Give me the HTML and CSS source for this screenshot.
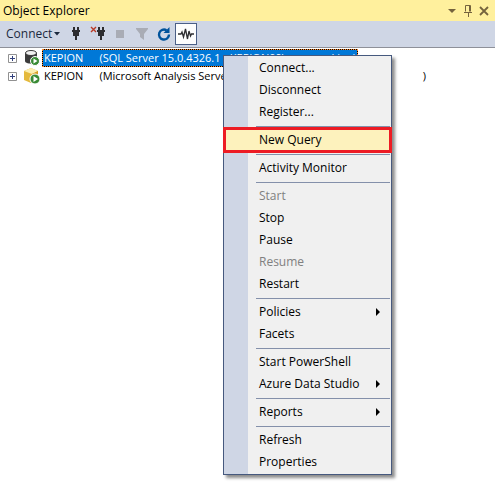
FILE: index.html
```
<!DOCTYPE html>
<html lang="en">
<head>
<meta charset="utf-8">
<title>Object Explorer</title>
<link rel="stylesheet" href="styles.css">
</head>
<body>
<header class="titlebar">
  <h1 class="title">Object Explorer</h1>
  <div class="window-tools">
    <button class="window-button" aria-label="Window position"><svg width="16" height="16" viewBox="0 0 16 16"><path d="M4 6h8L8 10z" fill="#75633d"/></svg></button>
    <button class="window-button" aria-label="Auto hide"><svg width="16" height="16" viewBox="0 0 16 16"><path d="M5.500 8.500v-6h5v6M4 9.500h8M8.500 9v5M9.500 3v5.500" fill="none" stroke="#75633d"/></svg></button>
    <button class="window-button" aria-label="Close"><svg width="16" height="16" viewBox="0 0 16 16"><path d="M4 4l8 8M12 4l-8 8" fill="none" stroke="#75633d" stroke-width="1.800"/></svg></button>
  </div>
</header>
<div class="toolbar">
  <button class="connect">Connect <svg width="6" height="4" viewBox="0 0 6 4"><path d="M0 0h6L3 3.500z" fill="#1b293e"/></svg></button>
  <button class="tool" aria-label="Connect Object Explorer"><svg width="16" height="16" viewBox="0 0 16 16"><path d="M5 1h2v3h2V1h2v3h1v2h-1v4H9v4H7v-4H5V6H4V4h1z" fill="#2d2d30"/></svg></button>
  <button class="tool" aria-label="Disconnect"><svg width="16" height="16" viewBox="0 0 16 16"><path d="M8 1h2v3h2V1h2v3h1v2h-1v4h-2v4h-2v-4H8V6H7V4h1z" fill="#2d2d30"/><path d="M1 1l5 5M6 1L1 6" stroke="#b93a26" stroke-width="1.400"/></svg></button>
  <button class="tool" aria-label="Stop" disabled><svg width="16" height="16" viewBox="0 0 16 16"><path d="M4 4h8v8H4z" fill="#a9acb5"/></svg></button>
  <button class="tool" aria-label="Filter" disabled><svg width="16" height="16" viewBox="0 0 16 16"><path d="M2 2h12v1L10 8v6L6 11V8L2 3z" fill="#a9acb5"/></svg></button>
  <button class="tool" aria-label="Refresh"><svg width="16" height="16" viewBox="0 0 16 16"><path d="M13 8.500A5 5 0 1 1 10.500 4.200" fill="none" stroke="#00539c" stroke-width="2.400"/><path d="M13.500 1v6H7.500z" fill="#00539c"/></svg></button>
  <button class="tool active" aria-label="Activity Monitor"><svg width="16" height="16" viewBox="0 0 16 16"><path d="M0 8h3l1-2 1.500 5 2-8 2 10 1.500-8 1.500 5 1-2h3" fill="none" stroke="#2d2d30" stroke-width="1.300"/></svg></button>
</div>
<main class="tree">
  <div class="node">
    <button class="expander" aria-label="Expand"><svg width="9" height="9" viewBox="0 0 9 9"><path d="M.5.5h8v8h-8z" fill="#fff" stroke="#919191"/><path d="M2 4.500h5M4.500 2v5" stroke="#32417d"/></svg></button>
    <svg class="node-icon" width="18" height="18" viewBox="0 0 18 18"><path d="M2 4v8c0 3.500 12 3.500 12 0V4z" fill="#3c3c3c"/><ellipse cx="8" cy="4" rx="5.500" ry="2.500" fill="#f2f2f2" stroke="#3c3c3c"/><circle cx="12" cy="12" r="4.500" fill="#388a34" stroke="#fff"/><path d="M10.500 9.500v5L14.500 12z" fill="#fff"/></svg>
    <span class="label selected"><span>KEPION</span><span>(SQL Server 15.0.4326.1 - KEPION09\</span><span class="tail">king)</span></span>
  </div>
  <div class="node">
    <button class="expander" aria-label="Expand"><svg width="9" height="9" viewBox="0 0 9 9"><path d="M.5.5h8v8h-8z" fill="#fff" stroke="#919191"/><path d="M2 4.500h5M4.500 2v5" stroke="#32417d"/></svg></button>
    <svg class="node-icon" width="18" height="18" viewBox="0 0 18 18"><path d="M8 1l7 3v8l-7 4-7-3V4z" fill="#e4b93c"/><path d="M8 1l7 3-6 3-8-3z" fill="#fbeeb0"/><path d="M9 7l6-3v8l-6 4z" fill="#d59b23"/><circle cx="12" cy="12" r="5" fill="#388a34" stroke="#fff"/><path d="M10.500 9v6L15 12z" fill="#fff"/></svg>
    <span class="label wide"><span>KEPION</span><span>(Microsoft Analysis Server</span><span class="tail">)</span></span>
  </div>
</main>
<div class="menu" role="menu">
  <button class="item" role="menuitem">Connect...</button>
  <button class="item" role="menuitem">Disconnect</button>
  <button class="item" role="menuitem">Register...</button>
  <hr class="separator">
  <button class="item highlighted" role="menuitem">New Query</button>
  <hr class="separator">
  <button class="item" role="menuitem">Activity Monitor</button>
  <hr class="separator">
  <button class="item" role="menuitem" disabled>Start</button>
  <button class="item" role="menuitem">Stop</button>
  <button class="item" role="menuitem">Pause</button>
  <button class="item" role="menuitem" disabled>Resume</button>
  <button class="item" role="menuitem">Restart</button>
  <hr class="separator">
  <button class="item submenu" role="menuitem">Policies</button>
  <button class="item" role="menuitem">Facets</button>
  <hr class="separator">
  <button class="item" role="menuitem">Start PowerShell</button>
  <button class="item submenu" role="menuitem">Azure Data Studio</button>
  <hr class="separator">
  <button class="item submenu" role="menuitem">Reports</button>
  <hr class="separator">
  <button class="item" role="menuitem">Refresh</button>
  <button class="item" role="menuitem">Properties</button>
</div>
</body>
</html>
```
FILE: styles.css
```
* { box-sizing: border-box; }
body {
  margin: 0;
  background: #fff;
  color: #000;
  font: 12px/18px "Open Sans", "Noto Sans", sans-serif;
}
button {
  margin: 0;
  padding: 0;
  border: 0;
  background: none;
  color: inherit;
  font: inherit;
}
svg { display: block; flex: none; }
.titlebar {
  display: flex;
  align-items: center;
  justify-content: space-between;
  height: 21px;
  padding: 0 3px;
  background: #fff09d;
}
.title { margin: 0; font: inherit; }
.window-tools { display: flex; }
.toolbar {
  display: flex;
  align-items: center;
  height: 27px;
  padding: 0 6px;
  background: #cfd6e5;
  border-bottom: 1px solid #8e9099;
  color: #1b293e;
}
.connect {
  display: flex;
  align-items: center;
  gap: 2px;
  width: 59px;
}
.tool {
  display: flex;
  align-items: center;
  justify-content: center;
  width: 22px;
  height: 22px;
}
.tool.active { border: 1px solid #4b5f86; background: #fdfdfd; }
.tree { padding-top: 1px; font-size: 11px; }
.node {
  display: flex;
  align-items: center;
  height: 18px;
  padding-left: 8px;
}
.node-icon { margin: 0 1px 0 6px; }
.label {
  display: flex;
  gap: 16px;
  width: 316px;
  height: 18px;
  padding: 0 1px;
  line-height: 16px;
  border: 1px dotted transparent;
  white-space: nowrap;
}
.label.selected {
  background: linear-gradient(#0078d7, #0078d7) padding-box, #000;
  border-color: #ff8728;
  color: #fff;
}
.label.wide { width: 386px; }
.tail { margin-left: auto; }
.menu {
  position: absolute;
  top: 55px;
  left: 223px;
  width: 169px;
  padding: 1px;
  border: 1px solid #46597e;
  background: linear-gradient(to right, #cfd6e5 24px, #f0f0f0 24px);
  box-shadow: 3px 3px 3px rgba(0, 0, 0, 0.45);
}
.item {
  display: flex;
  align-items: center;
  justify-content: space-between;
  width: 100%;
  height: 22px;
  padding: 0 10px 0 34px;
  text-align: left;
}
.item:disabled { color: #808080; }
.item.highlighted {
  background: #fdf2bd;
  outline: 3px solid #ed1c24;
  outline-offset: -1px;
}
.submenu::after {
  content: "";
  border: 4px solid transparent;
  border-left-color: #000;
  border-right: 0;
}
.separator {
  height: 1px;
  margin: 3px 0 2px 31px;
  border: 0;
  background: #8490aa;
}
```
